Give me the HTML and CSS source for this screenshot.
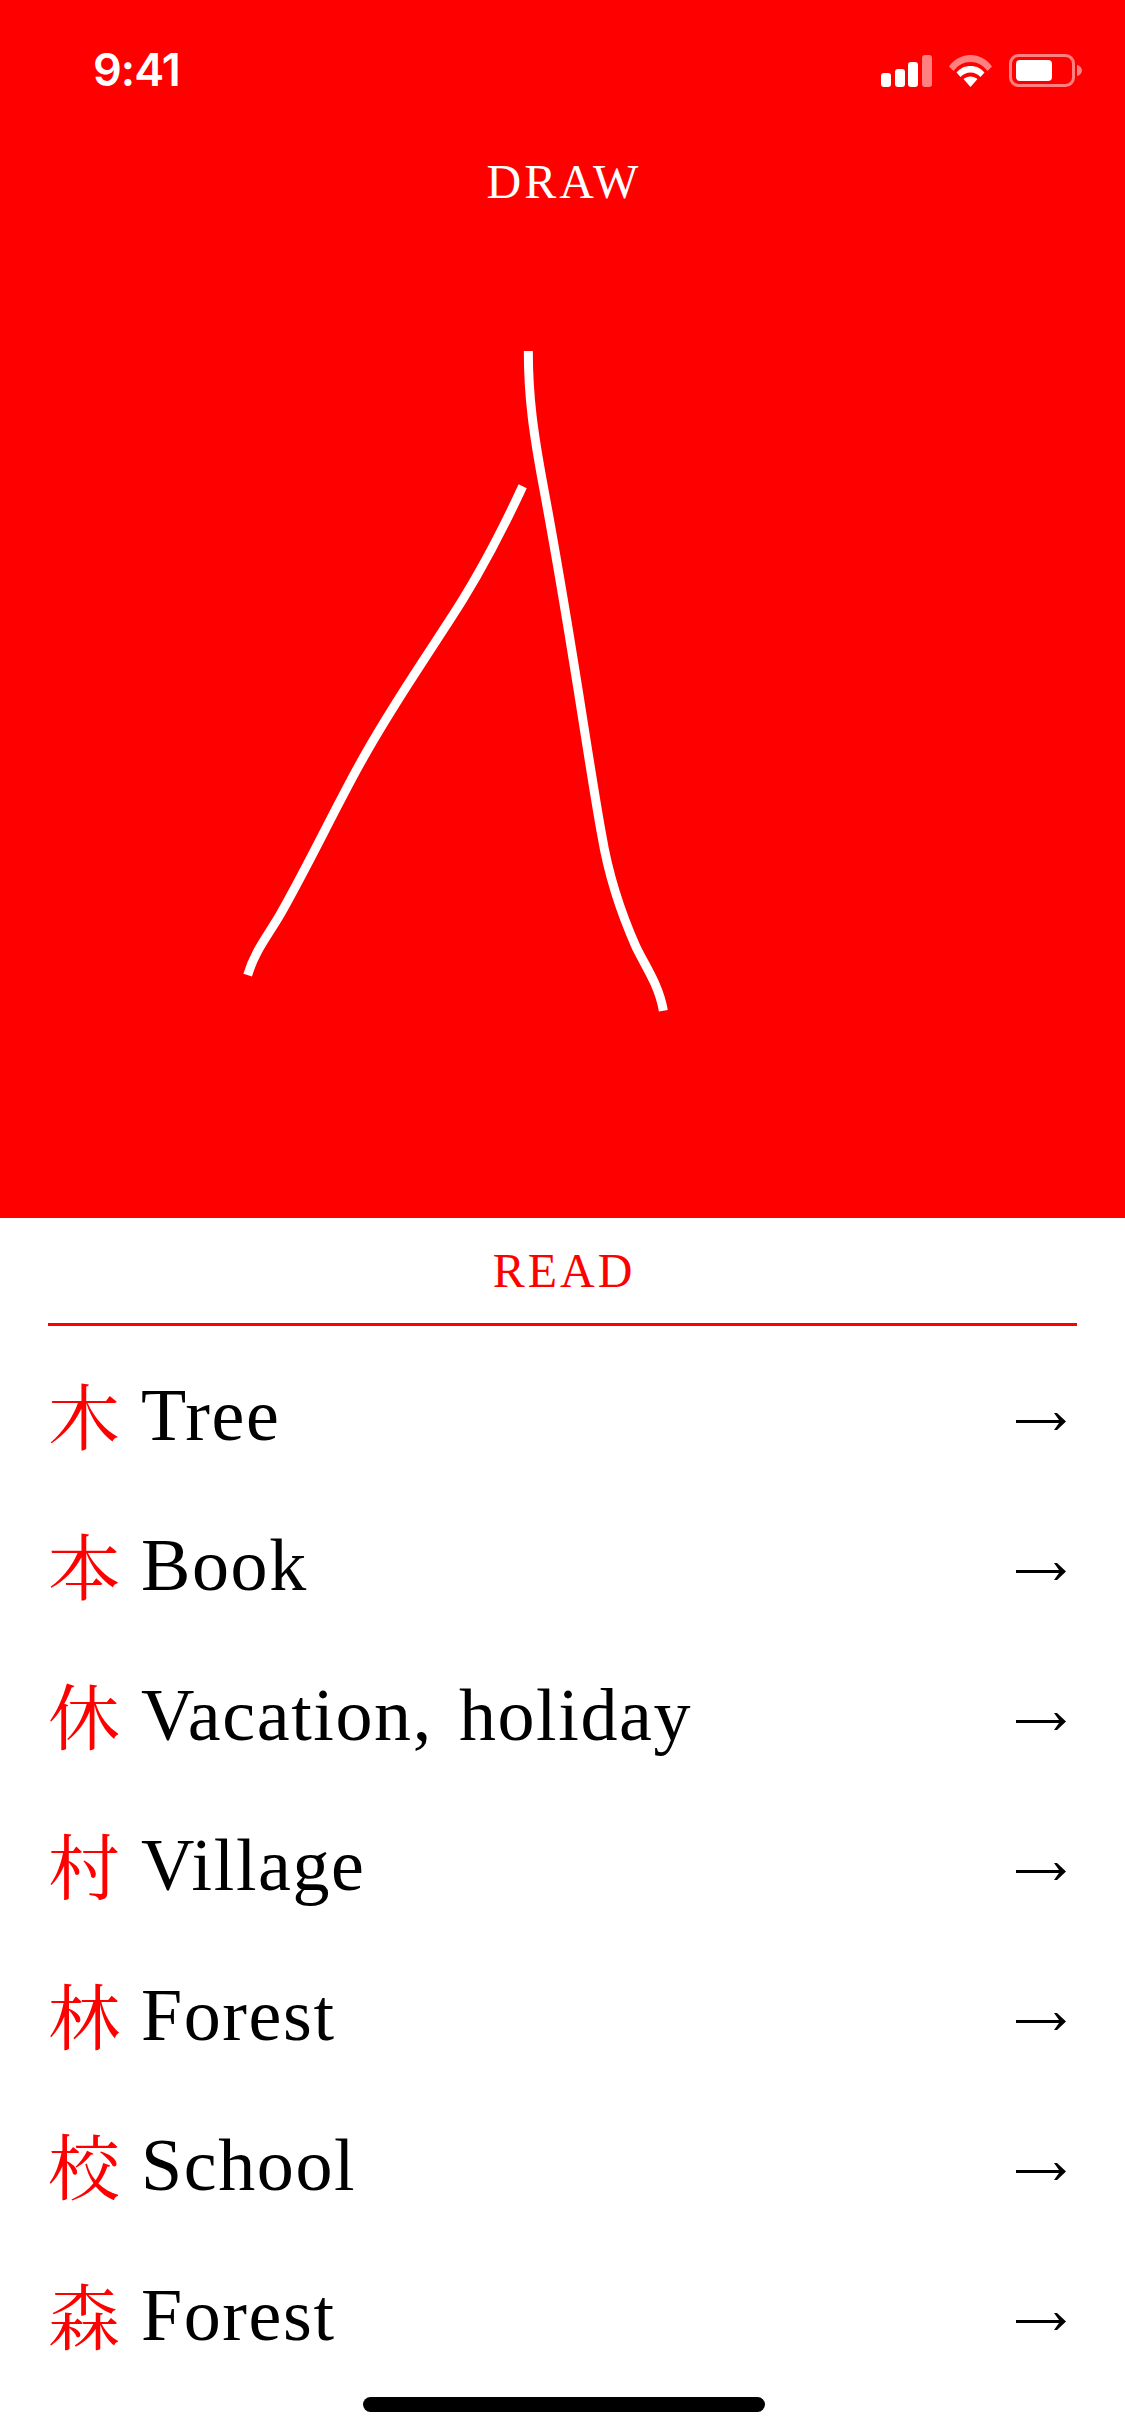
FILE: index.html
```html
<!DOCTYPE html>
<html lang="en">
<head>
<meta charset="utf-8">
<title>Kanji practice</title>
<link rel="stylesheet" href="styles.css">
</head>
<body>
<main class="app">
  <section class="draw">
    <svg class="strokes" viewBox="0 0 1125 1218" width="1125" height="1218" aria-hidden="true">
      <g transform="translate(200 330) scale(0.33333 0.44643)" fill="none" stroke="#fff" stroke-width="9">
        <path vector-effect="non-scaling-stroke" d="M985 47C985 150 1000 230 1030 350C1070 510 1110 690 1150 880C1170 975 1190 1070 1205 1130C1225 1220 1265 1310 1310 1385C1340 1430 1378 1470 1390 1525"/>
        <path vector-effect="non-scaling-stroke" d="M968 350C900 460 830 560 740 660C650 765 560 860 470 985C390 1095 320 1205 240 1310C205 1355 165 1390 143 1445"/>
      </g>
    </svg>
    <header class="status">
      <span class="time">9:41</span>
      <div class="status-icons">
        <svg class="signal" width="51" height="32" viewBox="0 0 51 32" aria-hidden="true">
          <rect x="0" y="18" width="10" height="14" rx="3" fill="#fff"/>
          <rect x="14" y="14" width="10" height="18" rx="3" fill="#fff"/>
          <rect x="27" y="7" width="10" height="25" rx="3" fill="#fff"/>
          <rect x="41" y="0" width="10" height="32" rx="3" fill="#fff" opacity="0.5"/>
        </svg>
        <svg class="wifi" width="43" height="32" viewBox="0 0 43 32" aria-hidden="true">
          <path d="M0 11.5C5.5 4 13 0 21.500 0S37.500 4 43 11.500L38.500 16C34 10 28 7 21.500 7S9 10 4.500 16Z" fill="#fff" opacity="0.5"/>
          <path d="M7.500 17.500C11.500 13 16 11 21.500 11S31.500 13 35.500 17.500L31.500 22C28.500 19 25.500 17.500 21.500 17.500S14.500 19 11.500 22Z" fill="#fff"/>
          <path d="M14.500 24C16.500 22.500 19 21.500 21.500 21.500S26.500 22.500 28.500 24L21.500 32Z" fill="#fff"/>
        </svg>
        <svg class="battery" width="73" height="33" viewBox="0 0 73 33" aria-hidden="true">
          <rect x="1.500" y="1.500" width="63" height="30" rx="8" fill="none" stroke="#fff" stroke-width="3" opacity="0.5"/>
          <rect x="7" y="6" width="36" height="21" rx="4" fill="#fff"/>
          <path d="M68 11C71 11.500 73 14 73 16.500S71 21.500 68 22Z" fill="#fff" opacity="0.5"/>
        </svg>
      </div>
    </header>
    <h1 class="section-title">DRAW</h1>
  </section>

  <section class="read">
    <h2 class="read-title">READ</h2>
    <ul class="list">
      <li class="row"><span class="kanji" lang="ja">木</span><span class="word">Tree</span><svg class="arrow" width="50" height="17" viewBox="0 0 50 17" aria-hidden="true"><path d="M0 7H43L38 0H41L50 8.500L41 17H38L43 10H0Z"/></svg></li>
      <li class="row"><span class="kanji" lang="ja">本</span><span class="word">Book</span><svg class="arrow" width="50" height="17" viewBox="0 0 50 17" aria-hidden="true"><path d="M0 7H43L38 0H41L50 8.500L41 17H38L43 10H0Z"/></svg></li>
      <li class="row"><span class="kanji" lang="ja">休</span><span class="word">Vacation, holiday</span><svg class="arrow" width="50" height="17" viewBox="0 0 50 17" aria-hidden="true"><path d="M0 7H43L38 0H41L50 8.500L41 17H38L43 10H0Z"/></svg></li>
      <li class="row"><span class="kanji" lang="ja">村</span><span class="word">Village</span><svg class="arrow" width="50" height="17" viewBox="0 0 50 17" aria-hidden="true"><path d="M0 7H43L38 0H41L50 8.500L41 17H38L43 10H0Z"/></svg></li>
      <li class="row"><span class="kanji" lang="ja">林</span><span class="word">Forest</span><svg class="arrow" width="50" height="17" viewBox="0 0 50 17" aria-hidden="true"><path d="M0 7H43L38 0H41L50 8.500L41 17H38L43 10H0Z"/></svg></li>
      <li class="row"><span class="kanji" lang="ja">校</span><span class="word">School</span><svg class="arrow" width="50" height="17" viewBox="0 0 50 17" aria-hidden="true"><path d="M0 7H43L38 0H41L50 8.500L41 17H38L43 10H0Z"/></svg></li>
      <li class="row"><span class="kanji" lang="ja">森</span><span class="word">Forest</span><svg class="arrow" width="50" height="17" viewBox="0 0 50 17" aria-hidden="true"><path d="M0 7H43L38 0H41L50 8.500L41 17H38L43 10H0Z"/></svg></li>
    </ul>
    <div class="home-indicator"></div>
  </section>
</main>
</body>
</html>
```
FILE: styles.css
```css
* { box-sizing: border-box; }
html, body { margin: 0; padding: 0; background: #fff; }
.app {
  width: 1125px;
  height: 2436px;
  overflow: hidden;
  display: flex;
  flex-direction: column;
  font-family: "Liberation Serif", "Noto Serif CJK JP", "Noto Sans CJK JP", serif;
}
.draw {
  position: relative;
  height: 1218px;
  flex: none;
  background: #ff0000;
  color: #fff;
}
.strokes { position: absolute; inset: 0; display: block; }
.status {
  position: relative;
  display: flex;
  justify-content: space-between;
  align-items: center;
  height: 33px;
  margin-top: 54px;
  padding: 0 43px 0 93px;
}
.time {
  font-family: Inter, "Liberation Sans", sans-serif;
  font-size: 45px;
  font-weight: 600;
  line-height: 33px;
  letter-spacing: -1px;
  margin-bottom: 2px;
}
.status-icons { display: flex; align-items: center; gap: 17px; }
.status-icons svg { display: block; }
.section-title {
  position: relative;
  margin: 75px 0 0;
  font-size: 48px;
  font-weight: 400;
  line-height: 40px;
  letter-spacing: 3px;
  text-indent: 3px;
  text-align: center;
}
.read { position: relative; flex: 1; color: #000; }
.read-title {
  margin: 0 48px;
  height: 108px;
  padding-top: 33px;
  border-bottom: 3px solid #ff0000;
  color: #ff0000;
  font-size: 48px;
  font-weight: 400;
  line-height: 40px;
  letter-spacing: 3px;
  text-indent: 3px;
  text-align: center;
}
.list { list-style: none; margin: 14px 0 0; padding: 0 48px; }
.row {
  display: flex;
  align-items: center;
  height: 150px;
}
.kanji {
  flex: none;
  width: 93px;
  margin-top: 10px;
  color: #ff0000;
  font-size: 72px;
  line-height: 90px;
}
.word {
  flex: 1;
  font-size: 74px;
  line-height: 90px;
  letter-spacing: 1.6px;
  word-spacing: 6px;
}
.arrow { flex: none; display: block; margin: 12px 11px 0 0; }
.home-indicator {
  position: absolute;
  left: 363px;
  top: 1179px;
  width: 402px;
  height: 15px;
  border-radius: 8px;
  background: #000;
}
```
